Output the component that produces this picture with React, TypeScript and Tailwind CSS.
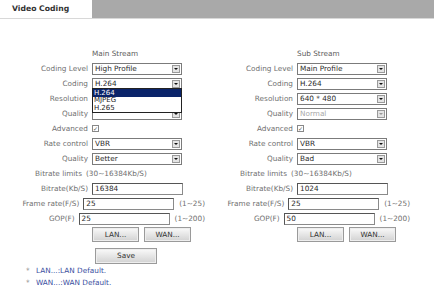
import type { ReactNode } from 'react'

type Row =
  | { label: string; kind: 'select'; value: string; disabled?: boolean }
  | { label: string; kind: 'input'; value: string; suffix?: string }
  | { label: string; kind: 'check' }
  | { label: string; kind: 'text'; value: string }

const mainRows: Row[] = [
  { label: 'Coding Level', kind: 'select', value: 'High Profile' },
  { label: 'Coding', kind: 'select', value: 'H.264' },
  { label: 'Resolution', kind: 'select', value: '' },
  { label: 'Quality', kind: 'select', value: '' },
  { label: 'Advanced', kind: 'check' },
  { label: 'Rate control', kind: 'select', value: 'VBR' },
  { label: 'Quality', kind: 'select', value: 'Better' },
  { label: 'Bitrate limits', kind: 'text', value: '(30~16384Kb/S)' },
  { label: 'Bitrate(Kb/S)', kind: 'input', value: '16384' },
  { label: 'Frame rate(F/S)', kind: 'input', value: '25', suffix: '(1~25)' },
  { label: 'GOP(F)', kind: 'input', value: '25', suffix: '(1~200)' },
]

const subRows: Row[] = [
  { label: 'Coding Level', kind: 'select', value: 'Main Profile' },
  { label: 'Coding', kind: 'select', value: 'H.264' },
  { label: 'Resolution', kind: 'select', value: '640 * 480' },
  { label: 'Quality', kind: 'select', value: 'Normal', disabled: true },
  { label: 'Advanced', kind: 'check' },
  { label: 'Rate control', kind: 'select', value: 'VBR' },
  { label: 'Quality', kind: 'select', value: 'Bad' },
  { label: 'Bitrate limits', kind: 'text', value: '(30~16384Kb/S)' },
  { label: 'Bitrate(Kb/S)', kind: 'input', value: '1024' },
  { label: 'Frame rate(F/S)', kind: 'input', value: '25', suffix: '(1~25)' },
  { label: 'GOP(F)', kind: 'input', value: '50', suffix: '(1~200)' },
]

function SelectBox({ value, disabled }: { value: string; disabled?: boolean }) {
  return (
    <div className="flex h-[12px] w-[90px] items-center border border-[#7b7b7b] bg-white pl-[2px]">
      <span className={disabled ? 'flex-1 text-[#a8a8a8]' : 'flex-1 text-[#2a2a2a]'}>{value}</span>
      <span className="mr-[1px] flex h-[8px] w-[8px] items-center justify-center border border-[#9a9a9a] bg-[#e4e4e4]">
        <span
          className={
            disabled
              ? 'h-0 w-0 border-x-[2px] border-t-[2px] border-x-transparent border-t-[#999]'
              : 'h-0 w-0 border-x-[2px] border-t-[2px] border-x-transparent border-t-[#111]'
          }
        />
      </span>
    </div>
  )
}

function Field({ row }: { row: Row }) {
  let control: ReactNode = null
  if (row.kind === 'select') control = <SelectBox value={row.value} disabled={row.disabled} />
  if (row.kind === 'input')
    control = (
      <>
        <div className="flex h-[12px] w-[91px] items-center border border-[#8a8a8a] border-t-[#555] border-l-[#555] bg-white pl-[2px] text-[#2a2a2a]">
          {row.value}
        </div>
        {row.suffix && <span className="ml-[5px] text-[#707070]">{row.suffix}</span>}
      </>
    )
  if (row.kind === 'check')
    control = (
      <span className="flex h-[7px] w-[7px] items-center justify-center border border-[#888] bg-white text-[6px] leading-none text-[#555]">
        ✓
      </span>
    )
  if (row.kind === 'text') control = <span className="-ml-[6px] text-[#707070]">{row.value}</span>

  return (
    <div className="flex h-[15px] items-center">
      <span className={row.kind === 'text' ? 'w-[82px] text-right text-[#707070]' : 'w-[88px] text-right text-[#707070]'}>
        {row.label}
      </span>
      <div className={row.kind === 'text' ? 'ml-[10px] flex items-center' : 'ml-[4px] flex items-center'}>{control}</div>
    </div>
  )
}

function Btn({ children, wide }: { children: ReactNode; wide?: boolean }) {
  return (
    <div
      className={
        (wide ? 'w-[62px] h-[16px] ' : 'w-[47px] h-[15px] ') +
        'flex items-center justify-center border border-[#9a9a9a] bg-gradient-to-b from-[#fafafa] to-[#d2d2d2] text-[#333] shadow-[inset_0_0_0_1px_#eee]'
      }
    >
      {children}
    </div>
  )
}

function Stream({ title, rows, save }: { title: string; rows: Row[]; save?: boolean }) {
  return (
    <div className="w-[205px] shrink-0">
      <div className="flex h-[15px] items-center pl-[92px] text-[#606060]">{title}</div>
      {rows.map((r, i) => (
        <Field key={i} row={r} />
      ))}
      <div className="mt-[1px] flex gap-[5px] pl-[92px]">
        <Btn>LAN...</Btn>
        <Btn>WAN...</Btn>
      </div>
      {save && (
        <div className="mt-[6px] pl-[95px]">
          <Btn wide>Save</Btn>
        </div>
      )}
    </div>
  )
}

export default function App() {
  return (
    <div className="relative h-[305px] w-[434px] overflow-hidden bg-white font-['DejaVu_Sans',Verdana,sans-serif] text-[7.3px] leading-none">
      <div className="flex h-[19px] border-b border-[#d8d8d8] bg-[#a9a9a9]">
        <div className="flex w-[92px] items-center bg-white pl-[12px] text-[7.7px] font-bold text-[#333]">
          Video Coding
        </div>
      </div>
      <div className="flex pt-[27px]">
        <Stream title="Main Stream" rows={mainRows} save />
        <Stream title="Sub Stream" rows={subRows} />
      </div>
      <div className="mt-[3px] space-y-[5px] pl-[26px] text-[#3a4ea0]">
        <div className="flex h-[7px] items-center">
          <span className="w-[10px] text-[#888]">*</span>LAN...:LAN Default.
        </div>
        <div className="flex h-[7px] items-center">
          <span className="w-[10px] text-[#888]">*</span>WAN...:WAN Default.
        </div>
      </div>

      {/* open coding dropdown */}
      <div className="absolute left-[92px] top-[88px] w-[90px] border border-[#222] bg-white text-[7px] text-[#222]">
        <div className="flex h-[8px] items-center bg-[#0a246a] pl-[1px] text-white">H.264</div>
        <div className="flex h-[7.5px] items-center pl-[1px]">MJPEG</div>
        <div className="flex h-[7.5px] items-center pl-[1px]">H.265</div>
      </div>
    </div>
  )
}
